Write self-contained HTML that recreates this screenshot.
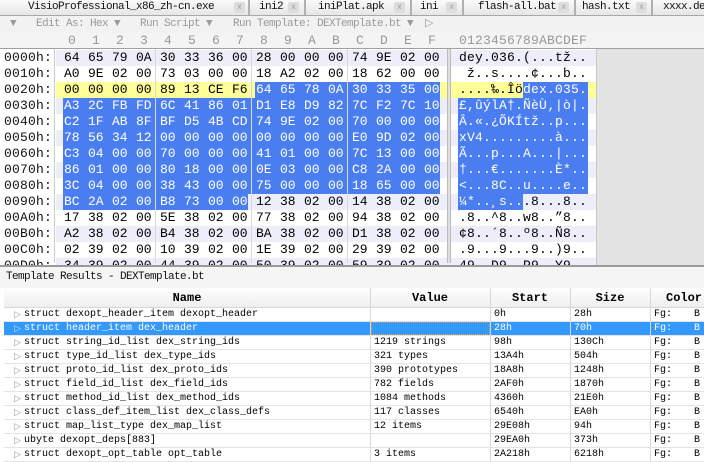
<!DOCTYPE html>
<html><head><meta charset="utf-8"><style>
*{margin:0;padding:0;box-sizing:border-box}
body{width:704px;height:462px;overflow:hidden;background:#fff;font-family:"Liberation Mono",monospace;position:relative}
.abs{position:absolute}
#tabs{left:0;top:0;width:704px;height:16px;background:#d8d8d8;border-bottom:1px solid #a8a8a8}
.tab{position:absolute;top:0;height:15px;background:linear-gradient(#fafafa,#e6e6e6);border-right:2px solid #b0b0b0;font-size:11px;letter-spacing:-0.6px;line-height:15px;color:#111;padding-left:6px;white-space:nowrap;overflow:hidden}
.x{position:absolute;top:2px;width:11px;height:11px;background:#ddd;border-radius:2px;font-size:8px;letter-spacing:0;line-height:11px;text-align:center;color:#999}
#tb{left:0;top:16px;width:704px;height:17px;background:#f2f2f2;font-size:11px;letter-spacing:-0.6px;line-height:17px;color:#9a9a9a;white-space:pre}
#tb span{position:absolute;top:0}
#ch{left:0;top:33px;width:704px;height:16px;background:#f4f4f4;border-bottom:1px solid #a0a0a0;font-size:13px;line-height:16px;color:#999}
#ch i{font-style:normal;position:absolute;top:0}
.row{position:absolute;left:0;width:596px;height:16px;font-size:13px;line-height:16px;color:#000}
.row b{position:absolute;left:4px;top:0;font-weight:normal;letter-spacing:.2px;color:#111}
.row .h{position:absolute;left:64px;top:0;white-space:nowrap}
.row .h i{font-style:normal;display:inline-block;width:24px}
.row .a{position:absolute;left:459px;top:0;letter-spacing:.2px;white-space:pre}
.bg{position:absolute;height:16px}
.vl{position:absolute;top:49px;width:1px;height:214px;background:#d8d8d8}
#right{left:596px;top:49px;width:108px;height:218px;background:#e3e3e3;border-left:1px solid #c8c8c8}
#panel{left:0;top:265px;width:704px;height:197px;border-top:2px solid #9a9a9a;background:#fff}
#title{left:0;top:267px;width:704px;height:21px;background:#f5f5f5;font-size:11px;letter-spacing:-0.6px;line-height:21px;padding-left:6px;color:#111}
#hdr{left:4px;top:288px;width:700px;height:20px;background:linear-gradient(#fdfdfd,#efefef);border-bottom:1px solid #d8d8d8;font-size:12px;font-weight:bold;line-height:20px}
#hdr span{position:absolute;top:0;text-align:center}
.tr{position:absolute;left:4px;width:700px;height:14px;border-bottom:1px solid #e4e4e4;font-size:10px;line-height:14px;color:#000;white-space:pre}
.tr span{position:absolute;top:0}
.tr .t{left:10px;color:#999;font-size:9px}
.sel{background:#3399ff;color:#fff}
.sel .t{color:#cde}
.cl{position:absolute;top:288px;width:1px;height:174px;background:#d8d8d8}
</style></head><body>
<div id="tabs" class="abs">
<div class="tab" style="left:0;width:250px;padding-left:28px">VisioProfessional_x86_zh-cn.exe<span class="x" style="left:234px">x</span></div>
<div class="tab" style="left:250px;width:56px;padding-left:9px">ini2<span class="x" style="left:38px">x</span></div>
<div class="tab" style="left:306px;width:106px;padding-left:12px">iniPlat.apk<span class="x" style="left:88px">x</span></div>
<div class="tab" style="left:412px;width:52px;padding-left:8px">ini<span class="x" style="left:34px">x</span></div>
<div class="tab" style="left:464px;width:112px;padding-left:14px">flash-all.bat<span class="x" style="left:94px">x</span></div>
<div class="tab" style="left:576px;width:77px;padding-left:6px">hash.txt<span class="x" style="left:60px">x</span></div>
<div class="tab" style="left:653px;width:60px;padding-left:10px">xxxx.dex</div>
</div>
<div id="tb" class="abs"><span style="left:10px">▼</span><span style="left:36px">Edit As: Hex ▼</span><span style="left:140px">Run Script ▼</span><span style="left:233px">Run Template: DEXTemplate.bt ▼  ▷</span></div>
<div id="ch" class="abs">
<i style="left:68px">0</i><i style="left:92px">1</i><i style="left:116px">2</i><i style="left:140px">3</i><i style="left:164px">4</i><i style="left:188px">5</i><i style="left:212px">6</i><i style="left:236px">7</i><i style="left:260px">8</i><i style="left:284px">9</i><i style="left:308px">A</i><i style="left:332px">B</i><i style="left:356px">C</i><i style="left:380px">D</i><i style="left:404px">E</i><i style="left:428px">F</i>
<i style="left:459px;letter-spacing:.2px">0123456789ABCDEF</i>
</div>
<div class="bg" style="left:56px;top:50px;width:540px;background:#eeeefa"></div>
<div class="bg" style="left:56px;top:66px;width:540px;background:#fff"></div>
<div class="bg" style="left:56px;top:82px;width:540px;background:#ffff99"></div>
<div class="bg" style="left:56px;top:98px;width:540px;background:#eeeefa"></div>
<div class="bg" style="left:56px;top:130px;width:540px;background:#eeeefa"></div>
<div class="bg" style="left:56px;top:162px;width:540px;background:#eeeefa"></div>
<div class="bg" style="left:56px;top:194px;width:540px;background:#eeeefa"></div>
<div class="bg" style="left:56px;top:226px;width:540px;background:#eeeefa"></div>
<div class="bg" style="left:56px;top:258px;width:540px;background:#eeeefa"></div>
<div class="bg" style="left:255px;top:82px;width:185px;background:#4a7ef0"></div>
<div class="bg" style="left:63px;top:98px;width:377px;height:96px;background:#4a7ef0"></div>
<div class="bg" style="left:63px;top:194px;width:185px;background:#4a7ef0"></div>
<div class="bg" style="left:523px;top:82px;width:65px;background:#4a7ef0"></div>
<div class="bg" style="left:458px;top:98px;width:130px;height:96px;background:#4a7ef0"></div>
<div class="bg" style="left:458px;top:194px;width:65px;background:#4a7ef0"></div>
<div class="vl" style="left:54px;background:#ccc"></div>
<div class="vl" style="left:155px"></div><div class="vl" style="left:251px"></div><div class="vl" style="left:347px"></div>
<div class="vl" style="left:447px;width:4px;background:#e0e0e0;border-left:1px solid #bbb;border-right:1px solid #bbb"></div>
<div id="right" class="abs"></div>

<div class="row" style="top:50px"><b>0000h:</b><span class="h"><i>64</i><i>65</i><i>79</i><i>0A</i><i>30</i><i>33</i><i>36</i><i>00</i><i>28</i><i>00</i><i>00</i><i>00</i><i>74</i><i>9E</i><i>02</i><i>00</i></span><span class="a">dey.036.(...tž..</span></div>
<div class="row" style="top:66px"><b>0010h:</b><span class="h"><i>A0</i><i>9E</i><i>02</i><i>00</i><i>73</i><i>03</i><i>00</i><i>00</i><i>18</i><i>A2</i><i>02</i><i>00</i><i>18</i><i>62</i><i>00</i><i>00</i></span><span class="a"> ž..s....¢...b..</span></div>
<div class="row" style="top:82px"><b>0020h:</b><span class="h"><i>00</i><i>00</i><i>00</i><i>00</i><i>89</i><i>13</i><i>CE</i><i>F6</i><i style="color:#fff">64</i><i style="color:#fff">65</i><i style="color:#fff">78</i><i style="color:#fff">0A</i><i style="color:#fff">30</i><i style="color:#fff">33</i><i style="color:#fff">35</i><i style="color:#fff">00</i></span><span class="a">....‰.Îö<span style="color:#fff">dex.035.</span></span></div>
<div class="row" style="top:98px;color:#fff"><b style="color:#111">0030h:</b><span class="h"><i>A3</i><i>2C</i><i>FB</i><i>FD</i><i>6C</i><i>41</i><i>86</i><i>01</i><i>D1</i><i>E8</i><i>D9</i><i>82</i><i>7C</i><i>F2</i><i>7C</i><i>10</i></span><span class="a">£,ûýlA†.ÑèÙ‚|ò|.</span></div>
<div class="row" style="top:114px;color:#fff"><b style="color:#111">0040h:</b><span class="h"><i>C2</i><i>1F</i><i>AB</i><i>8F</i><i>BF</i><i>D5</i><i>4B</i><i>CD</i><i>74</i><i>9E</i><i>02</i><i>00</i><i>70</i><i>00</i><i>00</i><i>00</i></span><span class="a">Â.«.¿ÕKÍtž..p...</span></div>
<div class="row" style="top:130px;color:#fff"><b style="color:#111">0050h:</b><span class="h"><i>78</i><i>56</i><i>34</i><i>12</i><i>00</i><i>00</i><i>00</i><i>00</i><i>00</i><i>00</i><i>00</i><i>00</i><i>E0</i><i>9D</i><i>02</i><i>00</i></span><span class="a">xV4.........à...</span></div>
<div class="row" style="top:146px;color:#fff"><b style="color:#111">0060h:</b><span class="h"><i>C3</i><i>04</i><i>00</i><i>00</i><i>70</i><i>00</i><i>00</i><i>00</i><i>41</i><i>01</i><i>00</i><i>00</i><i>7C</i><i>13</i><i>00</i><i>00</i></span><span class="a">Ã...p...A...|...</span></div>
<div class="row" style="top:162px;color:#fff"><b style="color:#111">0070h:</b><span class="h"><i>86</i><i>01</i><i>00</i><i>00</i><i>80</i><i>18</i><i>00</i><i>00</i><i>0E</i><i>03</i><i>00</i><i>00</i><i>C8</i><i>2A</i><i>00</i><i>00</i></span><span class="a">†...€.......È*..</span></div>
<div class="row" style="top:178px;color:#fff"><b style="color:#111">0080h:</b><span class="h"><i>3C</i><i>04</i><i>00</i><i>00</i><i>38</i><i>43</i><i>00</i><i>00</i><i>75</i><i>00</i><i>00</i><i>00</i><i>18</i><i>65</i><i>00</i><i>00</i></span><span class="a">&lt;...8C..u....e..</span></div>
<div class="row" style="top:194px"><b>0090h:</b><span class="h"><i style="color:#fff">BC</i><i style="color:#fff">2A</i><i style="color:#fff">02</i><i style="color:#fff">00</i><i style="color:#fff">B8</i><i style="color:#fff">73</i><i style="color:#fff">00</i><i style="color:#fff">00</i><i>12</i><i>38</i><i>02</i><i>00</i><i>14</i><i>38</i><i>02</i><i>00</i></span><span class="a"><span style="color:#fff">¼*..¸s..</span>.8...8..</span></div>
<div class="row" style="top:210px"><b>00A0h:</b><span class="h"><i>17</i><i>38</i><i>02</i><i>00</i><i>5E</i><i>38</i><i>02</i><i>00</i><i>77</i><i>38</i><i>02</i><i>00</i><i>94</i><i>38</i><i>02</i><i>00</i></span><span class="a">.8..^8..w8..”8..</span></div>
<div class="row" style="top:226px"><b>00B0h:</b><span class="h"><i>A2</i><i>38</i><i>02</i><i>00</i><i>B4</i><i>38</i><i>02</i><i>00</i><i>BA</i><i>38</i><i>02</i><i>00</i><i>D1</i><i>38</i><i>02</i><i>00</i></span><span class="a">¢8..´8..º8..Ñ8..</span></div>
<div class="row" style="top:242px"><b>00C0h:</b><span class="h"><i>02</i><i>39</i><i>02</i><i>00</i><i>10</i><i>39</i><i>02</i><i>00</i><i>1E</i><i>39</i><i>02</i><i>00</i><i>29</i><i>39</i><i>02</i><i>00</i></span><span class="a">.9...9...9..)9..</span></div>
<div class="row" style="top:258px"><b>00D0h:</b><span class="h"><i>34</i><i>39</i><i>02</i><i>00</i><i>44</i><i>39</i><i>02</i><i>00</i><i>50</i><i>39</i><i>02</i><i>00</i><i>59</i><i>39</i><i>02</i><i>00</i></span><span class="a">49..D9..P9..Y9..</span></div>

<div id="panel" class="abs"></div>
<div id="title" class="abs">Template Results - DEXTemplate.bt</div>
<div id="hdr" class="abs"><span style="left:0;width:366px">Name</span><span style="left:366px;width:120px">Value</span><span style="left:486px;width:80px">Start</span><span style="left:566px;width:80px">Size</span><span style="left:662px">Color</span></div>

<div class="tr" style="top:308px"><span class="t">▷</span><span style="left:20px">struct dexopt_header_item dexopt_header</span><span style="left:490px">0h</span><span style="left:570px">28h</span><span style="left:650px">Fg:</span><span style="left:690px">B</span></div>
<div class="tr sel" style="top:322px"><span class="t">▷</span><span style="left:20px">struct header_item dex_header</span><span style="left:367px;width:119px;height:13px;border:1px dotted #e8a040"></span><span style="left:490px">28h</span><span style="left:570px">70h</span><span style="left:650px">Fg:</span><span style="left:690px">B</span></div>
<div class="tr" style="top:336px"><span class="t">▷</span><span style="left:20px">struct string_id_list dex_string_ids</span><span style="left:370px">1219 strings</span><span style="left:490px">98h</span><span style="left:570px">130Ch</span><span style="left:650px">Fg:</span><span style="left:690px">B</span></div>
<div class="tr" style="top:350px"><span class="t">▷</span><span style="left:20px">struct type_id_list dex_type_ids</span><span style="left:370px">321 types</span><span style="left:490px">13A4h</span><span style="left:570px">504h</span><span style="left:650px">Fg:</span><span style="left:690px">B</span></div>
<div class="tr" style="top:364px"><span class="t">▷</span><span style="left:20px">struct proto_id_list dex_proto_ids</span><span style="left:370px">390 prototypes</span><span style="left:490px">18A8h</span><span style="left:570px">1248h</span><span style="left:650px">Fg:</span><span style="left:690px">B</span></div>
<div class="tr" style="top:378px"><span class="t">▷</span><span style="left:20px">struct field_id_list dex_field_ids</span><span style="left:370px">782 fields</span><span style="left:490px">2AF0h</span><span style="left:570px">1870h</span><span style="left:650px">Fg:</span><span style="left:690px">B</span></div>
<div class="tr" style="top:392px"><span class="t">▷</span><span style="left:20px">struct method_id_list dex_method_ids</span><span style="left:370px">1084 methods</span><span style="left:490px">4360h</span><span style="left:570px">21E0h</span><span style="left:650px">Fg:</span><span style="left:690px">B</span></div>
<div class="tr" style="top:406px"><span class="t">▷</span><span style="left:20px">struct class_def_item_list dex_class_defs</span><span style="left:370px">117 classes</span><span style="left:490px">6540h</span><span style="left:570px">EA0h</span><span style="left:650px">Fg:</span><span style="left:690px">B</span></div>
<div class="tr" style="top:420px"><span class="t">▷</span><span style="left:20px">struct map_list_type dex_map_list</span><span style="left:370px">12 items</span><span style="left:490px">29E08h</span><span style="left:570px">94h</span><span style="left:650px">Fg:</span><span style="left:690px">B</span></div>
<div class="tr" style="top:434px"><span class="t">▷</span><span style="left:20px">ubyte dexopt_deps[883]</span><span style="left:490px">29EA0h</span><span style="left:570px">373h</span><span style="left:650px">Fg:</span><span style="left:690px">B</span></div>
<div class="tr" style="top:448px"><span class="t">▷</span><span style="left:20px">struct dexopt_opt_table opt_table</span><span style="left:370px">3 items</span><span style="left:490px">2A218h</span><span style="left:570px">6218h</span><span style="left:650px">Fg:</span><span style="left:690px">B</span></div>
<div class="cl" style="left:370px"></div><div class="cl" style="left:490px"></div><div class="cl" style="left:570px"></div><div class="cl" style="left:650px"></div>
</body></html>
